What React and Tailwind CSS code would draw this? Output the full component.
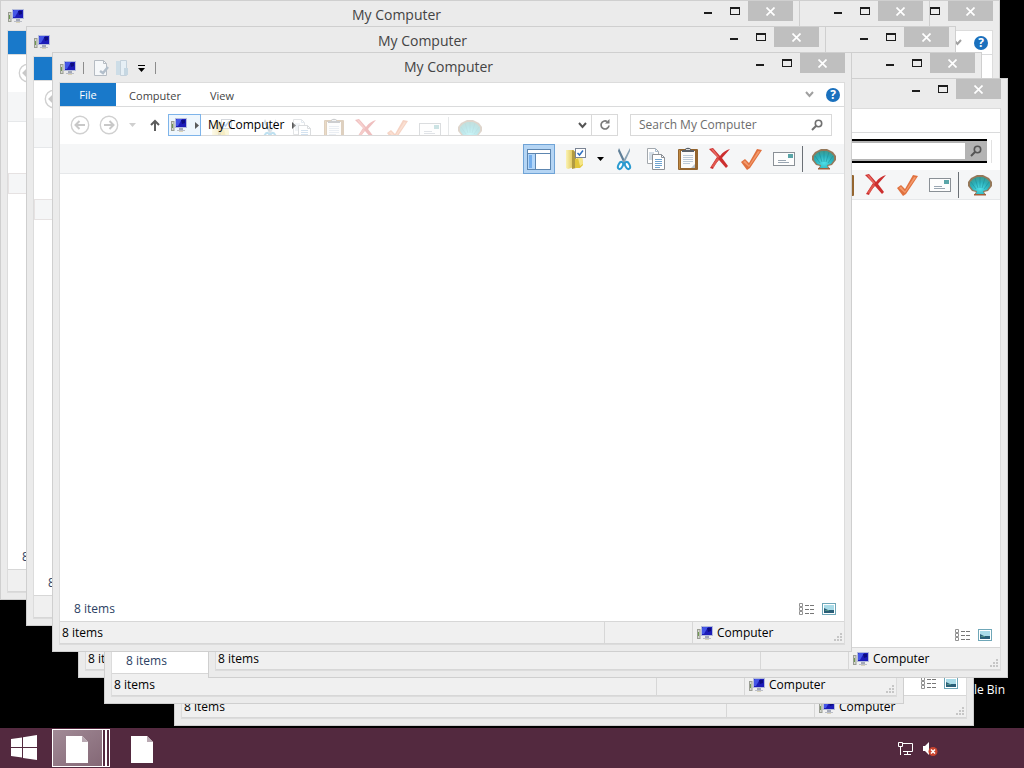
import React from 'react';

// Back to front. Windows in the background only carry the parts that stay in sight.
const WINDOWS = [
  { id: 'w1', x: 200, y: 0, help: true },
  { id: 'w2', x: 174, y: 126, status: '8 items', place: 'Computer' },
  { id: 'w3', x: 78, y: 78, status: '8 items' },
  { id: 'w4', x: 104, y: 104, details: '8 items', status: '8 items', place: 'Computer' },
  { id: 'w5', x: 130, y: 0 },
  { id: 'w6', x: 156, y: 26 },
  { id: 'w7', x: 182, y: 52 },
  { id: 'w8', x: 208, y: 78, status: '8 items', place: 'Computer', searchFocused: true },
  { id: 'w9', x: 0, y: 0, title: 'My Computer', details: '8 items', trace: true },
  { id: 'w10', x: 26, y: 26, title: 'My Computer', details: '8 items', trace: true },
  { id: 'w11', x: 52, y: 52, title: 'My Computer', details: '8 items', status: '8 items', place: 'Computer', help: true, active: true },
];

function ComputerIcon() {
  return (
    <svg width="16" height="16" viewBox="0 0 16 16" className="shrink-0">
      <rect x="0.5" y="4.5" width="2.500" height="9" fill="#d5d8d0" stroke="#9a9d94" />
      <rect x="1" y="7" width="1" height="4" fill="#6f9a52" />
      <path d="M4 1h12v10H4z" fill="#b4bcdc" />
      <path d="M5 2h10v8H5z" fill="#1c1cb8" />
      <path d="M6 2h5l-4 7H5V3z" fill="#4456e6" />
      <path d="M10 3h4v3l-3 1z" fill="#0c0c80" />
      <path d="M8 11h4v2H8z" fill="#a3a8b8" />
      <path d="M6 13h8v1H6z" fill="#babdc6" />
      <path d="M8 14h4v1H8z" fill="#d9d3b8" />
    </svg>
  );
}

function FolderCheckIcon() {
  return (
    <svg width="24" height="24" viewBox="0 0 24 24">
      <defs>
        <linearGradient id="folder" x1="0" x2="1" y1="0" y2="0">
          <stop offset="0" stopColor="#fbf3b4" />
          <stop offset="1" stopColor="#dcc04a" />
        </linearGradient>
      </defs>
      <path d="M1 3h8v17l-6 2-2-1z" fill="url(#folder)" />
      <path d="M7 3l4 2v16l-4 1z" fill="#b09a42" />
      <path d="M10 12l7-2 1 8-3 3h-5z" fill="#e2c63a" />
      <path d="M13 11l4-1 1 7-3 2z" fill="#f5e688" />
      <rect x="10.500" y="1.500" width="10" height="9" fill="#fff" stroke="#7a8494" />
      <path d="M12.500 6l2 2 3.500-4.500" fill="none" stroke="#2e6fc0" strokeWidth="1.500" />
    </svg>
  );
}

function ScissorsIcon() {
  return (
    <svg width="24" height="24" viewBox="0 0 24 24">
      <path d="M7 1l7 15-2 1L6 4z" fill="#5f7f98" />
      <path d="M18 1l-8 15 2 1 6-13z" fill="#8aa3b5" />
      <ellipse cx="8.500" cy="18.500" rx="2.200" ry="3.800" transform="rotate(25 8.500 18.500)" fill="#fff" stroke="#2b9bd0" strokeWidth="2" />
      <ellipse cx="15.500" cy="18.500" rx="2.200" ry="3.800" transform="rotate(-25 15.500 18.500)" fill="#fff" stroke="#2b9bd0" strokeWidth="2" />
    </svg>
  );
}

function CopyIcon() {
  return (
    <svg width="24" height="24" viewBox="0 0 24 24">
      <path d="M3.500 1.500h8l3 3v12h-11z" fill="#fff" stroke="#a3a8ad" />
      <path d="M11.500 1.500v3h3M5 6h5M5 8h4M5 10h4M5 12h4" fill="none" stroke="#a9bdd0" />
      <path d="M8.500 7.500h9l3 3v12h-12z" fill="#fff" stroke="#8b9096" />
      <path d="M17.500 7.500v3h3" fill="none" stroke="#8b9096" />
      <path d="M11 12.500h7M11 14.500h7M11 16.500h7M11 18.500h7M11 20.500h5" stroke="#6fa3cf" />
    </svg>
  );
}

function ClipboardIcon() {
  return (
    <svg width="24" height="24" viewBox="0 0 24 24">
      <rect x="2" y="2" width="20" height="21" rx="1" fill="#94652f" />
      <rect x="3" y="3" width="1" height="19" fill="#c08a44" />
      <path d="M5 4h14v17H5z" fill="#fbfbfb" />
      <path d="M19 17v4h-4z" fill="#b9c3cc" />
      <path d="M7 8.500h10M7 10.500h10M7 12.500h10M7 14.500h10M7 16.500h7" stroke="#bccad8" />
      <path d="M6 3h3c0-3 6-3 6 0h3v2H6z" fill="#5b6168" />
      <path d="M10 2h4v1h-4z" fill="#d6d9dc" />
    </svg>
  );
}

function DeleteIcon() {
  return (
    <svg width="24" height="24" viewBox="0 0 24 24">
      <path d="M1 2l4-1 7 8c3-4 6-6 10-7l-8 9 6 8-2 2-7-8c-3 3-5 6-6 9l-3-1 7-11z" fill="#cc2f2f" />
      <path d="M3 2.500l2-.5 6 8-1 1z" fill="#e86a62" />
      <path d="M3 20l6-9 2 1-5 8z" fill="#e0584f" />
    </svg>
  );
}

function CheckIcon() {
  return (
    <svg width="24" height="24" viewBox="0 0 24 24">
      <path d="M1 15l4-3 4 4 8-14 5 1L10 21l-3 2z" fill="#e0713f" />
      <path d="M3 15l2-1.500 4 5L18 4l2 .5L9 20z" fill="#f39a6c" />
    </svg>
  );
}

function MailIcon() {
  return (
    <svg width="24" height="24" viewBox="0 0 24 24">
      <rect x="1.500" y="5.500" width="21" height="13" fill="#fdfdfd" stroke="#8a9096" />
      <rect x="16" y="7" width="5" height="4" fill="#5aa5a8" />
      <path d="M6 13.500h8M6 15.500h11" stroke="#9aa6b2" />
    </svg>
  );
}

function ShellIcon() {
  return (
    <svg width="24" height="24" viewBox="0 0 24 24">
      <defs>
        <radialGradient id="shell" cx="0.5" cy="0.7" r="0.7">
          <stop offset="0" stopColor="#4fe0ea" />
          <stop offset="0.6" stopColor="#2bb0ba" />
          <stop offset="1" stopColor="#3d9a90" />
        </radialGradient>
      </defs>
      <path d="M6 22l2-3-4-1-4-5v-4l3-4 4-2 2-1h6l2 1 4 2 3 4v4l-4 5-4 1 2 3z" fill="#94785a" />
      <path d="M8 21l1-3-4-1-3-4v-4l3-3 4-2h6l4 2 3 3v4l-3 4-4 1 1 3z" fill="url(#shell)" />
      <path d="M12 15L12 4M10 15L7 5M8 16L3 9M14 15l3-10M16 16l5-7" stroke="#1c8790" strokeWidth="0.700" opacity="0.700" />
      <path d="M6 21h12v1.500H6z" fill="#a1603c" />
    </svg>
  );
}

function PaneIcon() {
  return (
    <svg width="24" height="24" viewBox="0 0 24 24">
      <rect x="0.500" y="2.500" width="23" height="20" fill="#fff" stroke="#5d86b0" />
      <path d="M1 6.500h22M8.500 7v15" stroke="#5d86b0" />
      <rect x="1" y="7" width="7" height="15" fill="#b3d7fa" />
      <rect x="2" y="8" width="3" height="13" fill="#74aeec" />
    </svg>
  );
}

function DownTriangle({ className }) {
  return (
    <svg width="7" height="4" viewBox="0 0 7 4" className={className}>
      <path d="M0 0h7L3.500 4z" fill="currentColor" />
    </svg>
  );
}

function RightTriangle() {
  return (
    <svg width="4" height="7" viewBox="0 0 4 7" className="shrink-0 text-[#5a5a5a]">
      <path d="M0 0v7l4-3.500z" fill="currentColor" />
    </svg>
  );
}

function Chevron({ className }) {
  return (
    <svg width="9" height="7" viewBox="0 0 9 7" className={className}>
      <path d="M1 1l3.500 4L8 1" fill="none" stroke="currentColor" strokeWidth="2" />
    </svg>
  );
}

function Magnifier() {
  return (
    <svg width="12" height="12" viewBox="0 0 12 12">
      <circle cx="7.500" cy="4.500" r="3.200" fill="none" stroke="currentColor" strokeWidth="1.600" />
      <path d="M5 7L1 11" stroke="currentColor" strokeWidth="2" />
    </svg>
  );
}

function ArrowCircle({ flip }) {
  return (
    <svg width="20" height="20" viewBox="0 0 20 20" className={flip ? 'rotate-180' : ''}>
      <circle cx="10" cy="10" r="8.700" fill="#fff" stroke="#d0d0d0" strokeWidth="1.400" />
      <path d="M15 10H6M9.500 6L5.500 10l4 4" fill="none" stroke="#c8c8c8" strokeWidth="2" />
    </svg>
  );
}

const TOOLS = [
  { label: 'Cut', Icon: ScissorsIcon },
  { label: 'Copy', Icon: CopyIcon },
  { label: 'Paste', Icon: ClipboardIcon },
  { label: 'Delete', Icon: DeleteIcon },
  { label: 'Rename', Icon: CheckIcon },
  { label: 'Properties', Icon: MailIcon },
];

function ToolBar() {
  return (
    <div className="flex h-[30px] shrink-0 items-center justify-end border-b border-[#e6e8ea] bg-[#f5f6f7] pr-1">
      <button type="button" aria-label="Navigation pane" className="mr-1.5 flex h-[30px] w-8 items-center justify-center border border-[#6fa3d6] bg-[#b5d5f4]">
        <PaneIcon />
      </button>
      <button type="button" aria-label="Select" className="flex w-8 justify-center">
        <FolderCheckIcon />
      </button>
      <button type="button" aria-label="Select options" className="flex w-[15px] justify-center">
        <DownTriangle className="text-black" />
      </button>
      {TOOLS.map(({ label, Icon }) => (
        <button key={label} type="button" aria-label={label} className="flex w-8 justify-center">
          <Icon />
        </button>
      ))}
      <span className="mx-0.5 h-[26px] border-l border-[#6b7076]" />
      <button type="button" aria-label="Classic Shell" className="ml-[3px] flex w-8 justify-center">
        <ShellIcon />
      </button>
    </div>
  );
}

// Faded copy of the tools that shows through the address field.
function GhostTools() {
  return (
    <div aria-hidden="true" className="pointer-events-none absolute inset-0 overflow-hidden">
      <div className="flex h-[30px] items-center justify-end pr-[131px] opacity-30">
        <span className="mr-[15px] flex w-8 justify-center"><FolderCheckIcon /></span>
        {TOOLS.map(({ label, Icon }) => (
          <span key={label} className="flex w-8 justify-center"><Icon /></span>
        ))}
        <span className="mx-0.5 h-[26px] border-l border-[#b0b4b8]" />
        <span className="ml-[3px] flex w-8 justify-center"><ShellIcon /></span>
      </div>
    </div>
  );
}

function TitleBar({ title, active }) {
  return (
    <div className="relative flex h-[29px] shrink-0 items-start">
      <div className="flex h-[29px] items-center">
        <ComputerIcon />
        {active && (
          <>
            <span className="ml-[7px] h-3 border-l border-[#8c8c8c]" />
            <button type="button" aria-label="Properties" className="ml-2">
              <svg width="18" height="18" viewBox="0 0 18 18">
                <path d="M2.500 1.500h9l3 3v12h-12z" fill="#f6f8fa" stroke="#b6bcc3" />
                <path d="M11.500 1.500v3h3" fill="none" stroke="#b6bcc3" />
                <path d="M8 12l3 2 5-6" fill="none" stroke="#b3bfcb" strokeWidth="2.500" />
              </svg>
            </button>
            <button type="button" aria-label="New folder" className="ml-1">
              <svg width="18" height="18" viewBox="0 0 18 18">
                <path d="M2 2h6v14H2z" fill="#cddde7" />
                <path d="M6.500 1.500h6v15h-6z" fill="#e6eff5" stroke="#c4d1db" />
                <path d="M10 9h4v7h-4z" fill="#c6d7e2" />
              </svg>
            </button>
            <button type="button" aria-label="Customize Quick Access Toolbar" className="ml-px flex w-4 flex-col items-center gap-0.5 pt-0.5 text-black">
              <span className="w-[7px] border-t border-black" />
              <DownTriangle />
            </button>
            <span className="ml-1.5 h-3 border-l border-[#8c8c8c]" />
          </>
        )}
      </div>
      {title && (
        <h2 className="pointer-events-none absolute inset-x-0 top-1 pr-2 text-center text-[14px] leading-5 text-[#444]">{title}</h2>
      )}
      <div className="ml-auto flex h-5">
        <button type="button" aria-label="Minimize" className="flex w-[26px] items-center justify-center pt-1">
          <span className="h-0.5 w-2 bg-[#1c1c1c]" />
        </button>
        <button type="button" aria-label="Maximize" className="flex w-[27px] items-center justify-center">
          <span className="h-2 w-2.5 border border-t-2 border-[#1c1c1c]" />
        </button>
        <button type="button" aria-label="Close" className="flex w-[45px] items-center justify-center bg-[#bfbfbf]">
          <svg width="9" height="9" viewBox="0 0 9 9">
            <path d="M0.500 0.500l8 8M8.500 0.500l-8 8" stroke="#fff" strokeWidth="1.700" />
          </svg>
        </button>
      </div>
    </div>
  );
}

function Ribbon({ active, help }) {
  return (
    <div className="flex h-6 shrink-0 items-stretch border-b border-[#dadbdc] bg-white text-[11px] text-[#444]">
      <button type="button" aria-label="File" className="w-14 bg-[#1979ca] pt-0.5 text-white">{active && 'File'}</button>
      {active && (
        <>
          <button type="button" className="ml-1 w-[70px] pt-[3px]">Computer</button>
          <button type="button" className="ml-1 w-14 pt-[3px]">View</button>
        </>
      )}
      {help && (
        <div className="ml-auto flex items-center gap-3 pr-1">
          <button type="button" aria-label="Expand the Ribbon" className="text-[#a0a0a0]"><Chevron /></button>
          <button type="button" aria-label="Help" className="flex h-3.5 w-3.5 items-center justify-center rounded-full bg-[#1a70bd] text-[12px] font-bold leading-none text-white">?</button>
        </div>
      )}
    </div>
  );
}

function SearchBox({ active, focused }) {
  if (focused) {
    return (
      <div className="w-[205px] shrink-0 -mr-1 border-r border-[#e2e2e2] pr-1">
        <div className="-mt-px flex h-6 border-y-2 border-black bg-[#b4b4b4]">
          <input aria-label="Search" type="text" className="my-0.5 min-w-0 flex-1 bg-white px-2 outline-none" />
          <button type="button" aria-label="Search" className="flex w-[22px] items-center justify-center text-[#555]"><Magnifier /></button>
        </div>
      </div>
    );
  }
  return (
    <div className="flex h-[22px] w-[202px] shrink-0 items-center border border-[#d9d9d9] bg-white pr-2">
      <input aria-label="Search My Computer" type="text" placeholder={active ? 'Search My Computer' : undefined} className="min-w-0 flex-1 bg-transparent pl-2 text-[12px] outline-none placeholder:text-[#6d6d6d]" />
      <button type="button" aria-label="Search" className="text-[#707070]"><Magnifier /></button>
    </div>
  );
}

function NavRow({ active, searchFocused }) {
  return (
    <div className="flex h-[37px] shrink-0 items-start bg-white pl-2.5 pr-3 pt-[7px]">
      <div className="flex h-[22px] items-center">
        <button type="button" aria-label="Back"><ArrowCircle /></button>
        <button type="button" aria-label="Forward" className="ml-[9px]"><ArrowCircle flip /></button>
        <button type="button" aria-label="Recent locations" className="ml-2.5 text-[#cfcfcf]"><DownTriangle /></button>
        <button type="button" aria-label="Up" className="ml-3.5">
          <svg width="10" height="12" viewBox="0 0 10 12">
            <path d="M5 12V2M1 6l4-4 4 4" fill="none" stroke="#5c5c5c" strokeWidth="2" />
          </svg>
        </button>
      </div>
      <div className="relative ml-2 flex h-[22px] min-w-0 flex-1 items-center border border-[#d9d9d9]">
        {active && <GhostTools />}
        <button type="button" aria-label="Location" className="-ml-px flex h-[22px] w-[33px] shrink-0 items-center gap-2 border border-[#7eb4ea] bg-[#eef6fd] pl-0.5">
          <ComputerIcon />
          <RightTriangle />
        </button>
        {active && (
          <button type="button" className="relative ml-[7px] whitespace-nowrap text-[12px] text-black">My Computer</button>
        )}
        <span className="ml-2"><RightTriangle /></span>
        <button type="button" aria-label="Previous locations" className="ml-auto mr-1 text-[#555]"><Chevron /></button>
        <button type="button" aria-label="Refresh" className="flex h-5 w-[26px] items-center justify-center border-l border-[#d9d9d9]">
          <svg width="12" height="12" viewBox="0 0 12 12">
            <path d="M8 2.500A4 4 0 1 0 10 6.500" fill="none" stroke="#7a7a7a" strokeWidth="1.700" />
            <path d="M6 4.500h4.500V0z" fill="#7a7a7a" />
          </svg>
        </button>
      </div>
      <div className="ml-3 flex">
        <SearchBox active={active} focused={searchFocused} />
      </div>
    </div>
  );
}

function DetailsRow({ details }) {
  return (
    <div className="flex h-6 shrink-0 items-center pl-3.5 pr-2 text-[12px] text-[#2b3f63]">
      <span>{details}</span>
      <button type="button" aria-label="Details view" className="ml-auto">
        <svg width="16" height="13" viewBox="0 0 16 13">
          <path d="M0.500 0.500h3v3h-3zM0.500 4.500h3v3h-3zM0.500 8.500h3v3h-3z" fill="#fff" stroke="#929292" />
          <path d="M6 2.500h10M6 6.500h10M6 10.500h10" stroke="#777" strokeDasharray="4 1" />
        </svg>
      </button>
      <button type="button" aria-label="Thumbnail view" className="ml-[7px]">
        <svg width="14" height="12" viewBox="0 0 14 12">
          <rect x="0.500" y="0.500" width="13" height="11" fill="#fff" stroke="#6fa7b8" />
          <path d="M2 2h10v8H2z" fill="#a9dbe8" />
          <path d="M2 5l4 2 6 0v3H2z" fill="#2a5f78" />
          <path d="M3 7h4v1H3z" fill="#4f8f83" />
        </svg>
      </button>
    </div>
  );
}

function StatusBar({ status, place }) {
  return (
    <div className="flex h-[23px] shrink-0 items-stretch border-y border-[#d7d7d7] bg-[#f0f0f0] text-[12px] text-black">
      <div className="flex flex-1 items-center pl-0.5 pt-px">{status}</div>
      <div className="w-[88px] border-l border-[#d7d7d7]" />
      <div className="flex w-[152px] items-center gap-1 border-l border-[#d7d7d7] pl-1 pt-px">
        <ComputerIcon />
        <span>{place}</span>
        <svg width="10" height="10" viewBox="0 0 10 10" className="ml-auto self-end">
          <path d="M6 0h2v2H6zM3 3h2v2H3zM6 3h2v2H6zM0 6h2v2H0zM3 6h2v2H3zM6 6h2v2H6z" fill="#c6c6c6" />
        </svg>
      </div>
    </div>
  );
}

function ExplorerWindow({ x, y, title, active, help, details, status, place, searchFocused, trace }) {
  return (
    <section
      aria-label="My Computer"
      className="absolute flex h-[600px] w-[800px] flex-col border border-[#cfcfcf] bg-[#ebebeb] px-1.5 pb-1.5"
      style={{ left: x, top: y }}
    >
      <div className="flex shrink-0 flex-col pl-px">
        <TitleBar title={title} active={active} />
      </div>
      <div className="flex min-h-0 flex-1 flex-col border border-[#dcdcdc] bg-white">
        <Ribbon active={active} help={help} />
        <NavRow active={active} searchFocused={searchFocused} />
        <ToolBar />
        <div className="flex-1 pt-[51px]">
          {trace && <div className="h-[21px] w-40 border border-[#e6e2e2] bg-[#f5f6f7]" />}
        </div>
        <DetailsRow details={details} />
        <StatusBar status={status} place={place} />
      </div>
    </section>
  );
}

function PageIcon() {
  return (
    <svg width="22" height="27" viewBox="0 0 22 27">
      <path d="M0 0h16l6 6v21H0z" fill="#fff" />
      <path d="M16 0v6h6z" fill="#b9a9b2" />
    </svg>
  );
}

function Taskbar() {
  return (
    <footer className="flex h-10 shrink-0 items-stretch bg-[#53293f]">
      <button type="button" aria-label="Start" className="flex w-12 items-center justify-center">
        <svg width="26" height="26" viewBox="0 0 26 26">
          <path d="M0 4l11-1.500V12H0zM12 2.300L26 0v12H12zM0 13h11v9.500L0 21zM12 13h14v12l-14-2z" fill="#fff" />
        </svg>
      </button>
      <button type="button" aria-label="My Computer windows" className="my-px ml-1 flex">
        <span className="flex w-[51px] items-center justify-center border border-white bg-linear-to-br from-[#a18a96] to-[#846876] pr-0.5 pt-0.5">
          <PageIcon />
        </span>
        <span className="w-1 border-y border-r-2 border-white bg-[#53293f]" />
        <span className="w-[3px] border-y border-r border-white bg-[#53293f]" />
      </button>
      <button type="button" aria-label="Document" className="ml-2 flex w-12 items-center justify-center pt-0.5">
        <PageIcon />
      </button>
      <div className="ml-auto flex items-center gap-2 pr-[86px] pt-0.5">
        <svg width="16" height="14" viewBox="0 0 16 14" fill="none" stroke="#fff">
          <path d="M5 1.500h9.500v8H5M9.500 10v2.500M6 12.500h7" />
          <path d="M0.500 0.500h4v4h-4zM2.500 5v8" />
        </svg>
        <svg width="16" height="16" viewBox="0 0 16 16">
          <path d="M1 5h2l4-4v13l-4-4H1z" fill="#fff" />
          <circle cx="11" cy="10.500" r="4.500" fill="#c8442f" />
          <path d="M9 8.500l4 4M13 8.500l-4 4" stroke="#fff" strokeWidth="1.500" />
        </svg>
      </div>
    </footer>
  );
}

export default function App() {
  return (
    <div className="flex h-screen flex-col overflow-hidden bg-black font-['Open_Sans','Noto_Sans',sans-serif]">
      <main className="relative min-h-0 flex-1 overflow-hidden">
        <div className="absolute bottom-[30px] right-[19px] text-[12px] leading-4 text-white">Recycle Bin</div>
        {WINDOWS.map((win) => (
          <ExplorerWindow key={win.id} {...win} />
        ))}
      </main>
      <Taskbar />
    </div>
  );
}
